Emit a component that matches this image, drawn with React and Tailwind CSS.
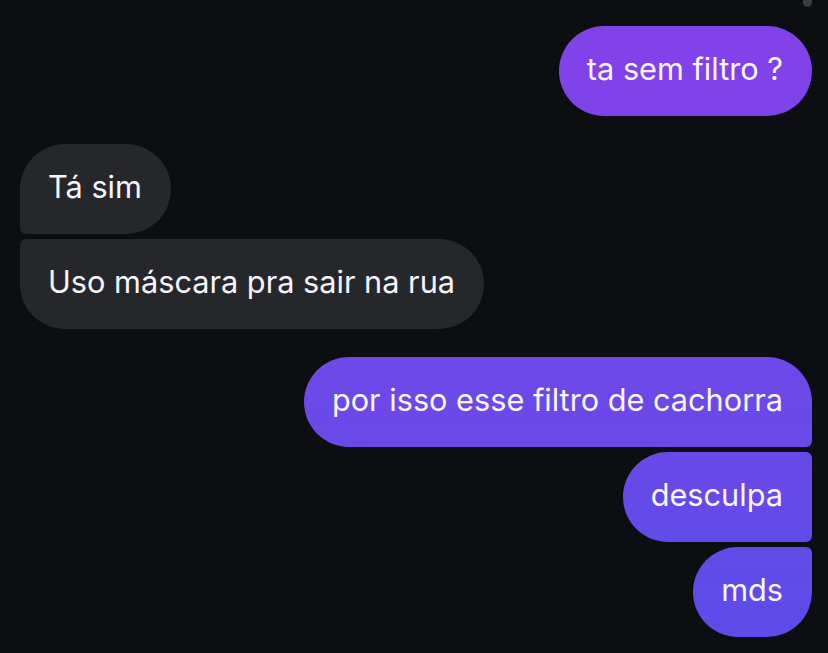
import React from 'react';

const mensagens = [
  { id: 1, lado: 'eu', texto: 'ta sem filtro ?', canto: 'rounded-full' },
  { id: 2, lado: 'outro', texto: 'Tá sim', canto: 'rounded-r-[45px] rounded-tl-[45px] rounded-bl-[6px]', novoGrupo: true },
  { id: 3, lado: 'outro', texto: 'Uso máscara pra sair na rua', canto: 'rounded-r-[45px] rounded-bl-[45px] rounded-tl-[6px]' },
  { id: 4, lado: 'eu', texto: 'por isso esse filtro de cachorra', canto: 'rounded-l-[45px] rounded-tr-[45px] rounded-br-[6px]', novoGrupo: true },
  { id: 5, lado: 'eu', texto: 'desculpa', canto: 'rounded-l-[45px] rounded-r-[6px]' },
  { id: 6, lado: 'eu', texto: 'mds', canto: 'rounded-l-[45px] rounded-br-[45px] rounded-tr-[6px]' },
];

const Bolha = ({ msg }) => {
  const meu = msg.lado === 'eu';
  return (
    <div className={`flex ${meu ? 'justify-end' : 'justify-start'} ${msg.novoGrupo ? 'mt-[28px]' : 'mt-[5px]'} first:mt-0`}>
      <div
        className={`h-[90px] flex items-center pl-[28px] pr-[29px] pb-[3px] text-[30.7px] leading-none text-[#f8f5ff] whitespace-nowrap ${msg.canto} ${
          meu
            ? 'bg-fixed bg-linear-to-b from-[#8441e8] to-[#5a4ce9]'
            : 'bg-[#26272b]'
        }`}
      >
        {msg.texto}
      </div>
    </div>
  );
};

const App = () => {
  return (
    <div
      className="relative w-full h-[653px] overflow-hidden bg-[#0c0e12] pt-[26px] pl-[20px] pr-[16px]"
      style={{ fontFamily: 'Inter, "Noto Sans", sans-serif' }}
    >
      {/* indicador de rolagem */}
      <div className="absolute top-[-4px] right-[16px] w-[9px] h-[11px] rounded-full bg-[#3b3c41]" />

      <div className="flex flex-col">
        {mensagens.map((m) => (
          <Bolha key={m.id} msg={m} />
        ))}
      </div>
    </div>
  );
};

export default App;
